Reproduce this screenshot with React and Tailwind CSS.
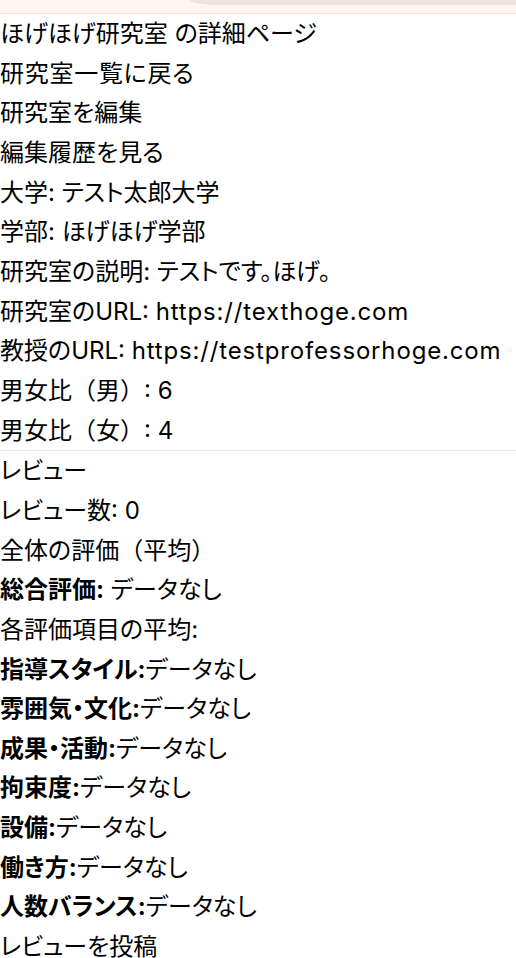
import React from "react";

const lab = {
  name: "ほげほげ研究室",
  university: "テスト太郎大学",
  faculty: "ほげほげ学部",
  description: "テストです。ほげ。",
  labUrl: "https://texthoge.com",
  professorUrl: "https://testprofessorhoge.com",
  male: 6,
  female: 4,
};

const items = ["指導スタイル", "雰囲気・文化", "成果・活動", "拘束度", "設備", "働き方", "人数バランス"];

// full-width brackets keep their normal width
const Paren = ({ children }) => (
  <>
    <span className="[font-feature-settings:normal]">（</span>
    {children}
    <span className="[font-feature-settings:normal]">）</span>
  </>
);

const Url = ({ children }) => <span className="tracking-[0.035em]">{children}</span>;

const App = () => {
  return (
    <div
      className="min-h-screen bg-white text-black text-[24px] leading-[39.65px] [font-feature-settings:'palt']"
      style={{ fontFamily: '"Inter", "Noto Sans CJK JP", sans-serif' }}
    >
      <div className="h-[14px] bg-[#fff5f1] border-b border-[#f6e3d7] flex">
        <div className="ml-[190px] flex-1 h-[5px] bg-[#ece4df] rounded-bl-[28px_5px]"></div>
      </div>

      <div>
        <h1>{lab.name} の詳細ページ</h1>
        <a href="#" className="tracking-[0.03em]">研究室一覧に戻る</a>
        <div><a href="#">研究室を編集</a></div>
        <div><a href="#">編集履歴を見る</a></div>
        <p>大学: {lab.university}</p>
        <p>学部: {lab.faculty}</p>
        <p>研究室の説明: {lab.description}</p>
        <p>研究室のURL: <Url>{lab.labUrl}</Url></p>
        <p>教授のURL: <Url>{lab.professorUrl}</Url></p>
        <p>男女比<Paren>男</Paren>: {lab.male}</p>
        <p>男女比<Paren>女</Paren>: {lab.female}</p>
      </div>

      <hr className="border-gray-200" />

      <div>
        <h2>レビュー</h2>
        <p>レビュー数: 0</p>
        <h3>全体の評価<Paren>平均</Paren></h3>
        <p>
          <strong>総合評価:</strong> データなし
        </p>
        <p>各評価項目の平均:</p>
        {items.map((item) => (
          <p key={item}>
            <strong>{item}:</strong>データなし
          </p>
        ))}
        <h3>レビューを投稿</h3>
      </div>
    </div>
  );
};

export default App;
